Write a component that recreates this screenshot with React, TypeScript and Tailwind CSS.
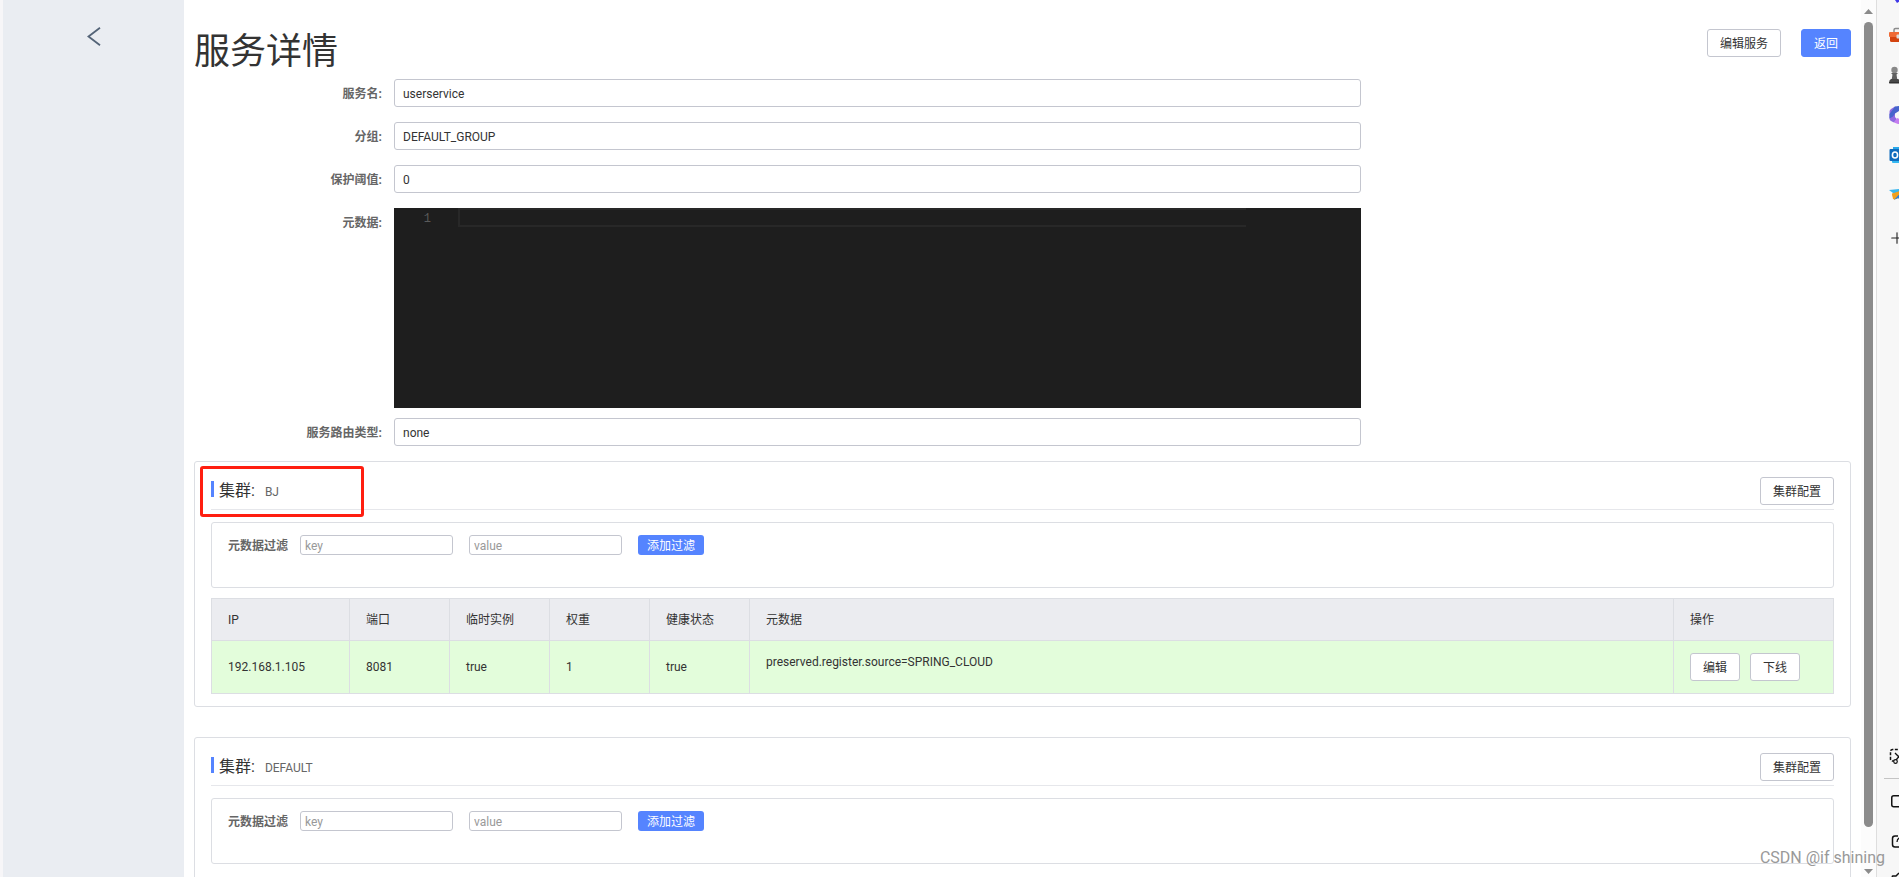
import { ReactNode } from "react"
import { Plus } from "lucide-react"

type Instance = {
  ip: string
  port: number
  ephemeral: boolean
  weight: number
  healthy: boolean
  metadata: string
}

type Cluster = {
  name: string
  marked?: boolean
  instances: Instance[]
}

const clusters: Cluster[] = [
  {
    name: "BJ",
    marked: true,
    instances: [
      {
        ip: "192.168.1.105",
        port: 8081,
        ephemeral: true,
        weight: 1,
        healthy: true,
        metadata: "preserved.register.source=SPRING_CLOUD",
      },
    ],
  },
  { name: "DEFAULT", instances: [] },
]

function Button({ children, primary }: { children: ReactNode; primary?: boolean }) {
  return (
    <button
      className={`h-7 shrink-0 rounded-[3px] border px-3 pt-0.5 text-xs whitespace-nowrap cursor-pointer ${
        primary ? "border-[#5584ff] bg-[#5584ff] text-white" : "border-[#c4c6cf] bg-white text-[#333]"
      }`}
    >
      {children}
    </button>
  )
}

function FormRow({ id, label, value }: { id: string; label: string; value: string }) {
  return (
    <div className="mb-[15px] flex">
      <label htmlFor={id} className="w-[200px] shrink-0 pr-3 text-right text-xs leading-[30px] font-bold text-[#666] h-7">
        {label}:
      </label>
      <input
        id={id}
        readOnly
        defaultValue={value}
        className="h-7 w-7/12 rounded-[3px] border border-[#c4c6cf] bg-white px-2 pt-0.5 text-xs text-[#333] outline-none"
      />
    </div>
  )
}

function MetadataEditor() {
  return (
    <div className="mb-2.5 flex">
      <label htmlFor="metadata" className="w-[200px] shrink-0 pr-3 text-right text-xs leading-[30px] font-bold text-[#666]">
        元数据:
      </label>
      <div className="flex h-[200px] w-7/12 bg-[#1e1e1e]">
        <span className="w-16 pr-[27px] text-right font-['Liberation_Mono',monospace] text-xs leading-[22px] text-[#5a5a5a]">
          1
        </span>
        <textarea
          id="metadata"
          readOnly
          className="mr-[115px] h-[19px] flex-1 resize-none border-2 border-r-0 border-[#282828] bg-transparent text-xs text-white outline-none"
        />
      </div>
    </div>
  )
}

function MetadataFilter({ name }: { name: string }) {
  const inputClass =
    "mr-4 h-5 w-[153px] rounded-[3px] border border-[#c4c6cf] px-1 pt-0.5 text-xs text-[#333] outline-none placeholder:text-[#999]"
  return (
    <div className="mt-3 flex items-center rounded-[3px] border border-[#dcdee3] px-4 pt-3 pb-8">
      <label htmlFor={`${name}-key`} className="mr-3 h-5 text-xs leading-[22px] font-bold text-[#666]">
        元数据过滤
      </label>
      <input id={`${name}-key`} placeholder="key" className={inputClass} />
      <input aria-label="value" placeholder="value" className={inputClass} />
      <button className="h-5 rounded-[3px] bg-[#5584ff] px-[9px] text-xs leading-[22px] text-white cursor-pointer">
        添加过滤
      </button>
    </div>
  )
}

function InstanceTable({ instances }: { instances: Instance[] }) {
  const th = "border border-[#dcdee3] px-4 text-left font-normal"
  const td = "border border-[#dcdee3] px-4"
  return (
    <table className="mt-2.5 w-full table-fixed border-collapse text-xs text-[#333]">
      <thead>
        <tr className="h-[42px] bg-[#ebecf0]">
          <th className={`${th} w-[138px]`}>IP</th>
          <th className={`${th} w-[100px]`}>端口</th>
          <th className={`${th} w-[100px]`}>临时实例</th>
          <th className={`${th} w-[100px]`}>权重</th>
          <th className={`${th} w-[100px]`}>健康状态</th>
          <th className={th}>元数据</th>
          <th className={`${th} w-[160px]`}>操作</th>
        </tr>
      </thead>
      <tbody>
        {instances.map((item) => (
          <tr key={item.ip} className="h-[53px] bg-[#e3fddb]">
            <td className={td}>{item.ip}</td>
            <td className={td}>{item.port}</td>
            <td className={td}>{String(item.ephemeral)}</td>
            <td className={td}>{item.weight}</td>
            <td className={td}>{String(item.healthy)}</td>
            <td className={`${td} pb-2.5`}>{item.metadata}</td>
            <td className={td}>
              <div className="flex gap-2.5">
                <Button>编辑</Button>
                <Button>下线</Button>
              </div>
            </td>
          </tr>
        ))}
      </tbody>
    </table>
  )
}

function ClusterCard({ cluster }: { cluster: Cluster }) {
  return (
    <section className="relative mb-[30px] min-h-[246px] rounded-[3px] border border-[#dcdee3] px-4 pt-[15px] pb-3">
      <div className="flex items-start justify-between border-b border-[#e6e7eb] pb-1">
        <h2 className="mt-1 flex items-start text-[#333]">
          <span className="mr-[5px] h-4 w-[3px] bg-[#5584ff]" />
          <span className="text-base leading-5">集群:</span>
          <span className="ml-2.5 text-xs leading-[22px] text-[#666]">{cluster.name}</span>
        </h2>
        <Button>集群配置</Button>
      </div>
      <MetadataFilter name={cluster.name} />
      {cluster.instances.length > 0 && <InstanceTable instances={cluster.instances} />}
      {cluster.marked && (
        <div className="pointer-events-none absolute top-1 left-[5px] h-[51px] w-[164px] rounded-[3px] border-3 border-[#ff1e10]" />
      )}
    </section>
  )
}

function Scrollbar() {
  return (
    <div className="flex w-[15px] shrink-0 flex-col items-center bg-[#fcfcfc] pt-[9px] pb-[3px]">
      <svg width="9" height="5" viewBox="0 0 9 5" className="shrink-0">
        <path d="M4.5 0 9 5H0z" fill="#8b8b8b" />
      </svg>
      <div className="mt-2 mb-[42px] w-[9px] flex-1 rounded-full bg-[#8b8b8b]" />
      <svg width="9" height="5" viewBox="0 0 9 5" className="shrink-0">
        <path d="M0 0h9L4.5 5z" fill="#8b8b8b" />
      </svg>
    </div>
  )
}

function BarIcon({ children, label }: { children: ReactNode; label: string }) {
  return (
    <button aria-label={label} className="flex h-10 w-8 shrink-0 items-center pl-3 cursor-pointer">
      <svg width="20" height="20" viewBox="0 0 20 20" fill="none" className="shrink-0">
        {children}
      </svg>
    </button>
  )
}

function BrowserBar() {
  return (
    <aside className="flex w-[23px] shrink-0 flex-col justify-between overflow-hidden border-l border-[#dedede] bg-[#f7f7f7]">
      <div className="-mt-[25px] flex flex-col">
        <BarIcon label="search">
          <circle cx="10" cy="9" r="7" fill="#3d4ef5" />
          <path d="M4 12l4 6 6-4z" fill="#4038e8" />
        </BarIcon>
        <BarIcon label="tools">
          <path d="M5 7V5Q5 3.500 6.500 3.500h7Q15 3.500 15 5V7" stroke="#8c8c8c" strokeWidth="1.500" />
          <rect x="0" y="7" width="20" height="5" rx="1" fill="#ef6a35" />
          <path d="M1 12h18v3.500q0 1.500-1.500 1.500h-15Q1 17 1 15.500z" fill="#d3430f" />
          <rect x="7.500" y="9.500" width="5" height="4" rx="1" fill="#ddd" />
        </BarIcon>
        <BarIcon label="games">
          <circle cx="5.500" cy="5" r="3.200" fill="#888" />
          <path d="M2 8h7l-1.500 1.500.8 5H2.700l.8-5z" fill="#606060" />
          <path d="M0 18q0-3 2-4h7q2 1 2 4z" fill="#484848" />
          <rect x="0" y="17" width="11" height="1.500" rx=".7" fill="#333" />
        </BarIcon>
        <BarIcon label="office">
          <path d="M6 1.500 2 4Q.5 5 .5 6.500v7q0 1.500 1.500 2.500l3 1.500 3-3-2-2.500V8l4-3z" fill="#8f6ae0" />
          <path d="M6 1.500 10 1l8 5-4 4-4-4-4 2.500-2 3-3.500 2V9z" fill="#4664cc" />
          <path d="M5 17.500 8 13l3 1 7-3v4l-6 4H9z" fill="#c57ef0" />
        </BarIcon>
        <BarIcon label="outlook">
          <rect x="4" y="2" width="14" height="6" fill="#28a8ea" />
          <rect x="4" y="8" width="14" height="10" fill="#1490df" />
          <rect x="3" y="15" width="16" height="3" rx="1" fill="#35b8f1" />
          <rect x="0.500" y="4" width="11" height="12" rx="1" fill="#0f6cbd" />
          <ellipse cx="6" cy="10" rx="2.600" ry="3" stroke="#fff" strokeWidth="1.600" />
        </BarIcon>
        <BarIcon label="drop">
          <path d="M0 5 20 3 14 10 4 8z" fill="#38b6ef" />
          <path d="M3 9 16 4 8 14H4z" fill="#f0a020" />
          <path d="M5 15 8 9l8-4-5 10-2-2z" fill="#2a7fe0" />
          <path d="M3 8.500 13 6 5 15z" fill="#f0a020" />
        </BarIcon>
        <button aria-label="add" className="mt-[3px] flex h-10 w-10 shrink-0 items-center pl-[11px] cursor-pointer">
          <Plus className="size-[18px] shrink-0 text-[#222]" strokeWidth={1.5} />
        </button>
      </div>
      <div className="-mb-6 flex flex-col">
        <BarIcon label="screenshot">
          <path d="M6 15H3.500Q1.500 15 1.500 13V5.500q0-2 2-2h12q2 0 2 2V13" stroke="#111" strokeWidth="1.500" strokeDasharray="3 1.500" />
          <path d="M6 7l8 8M12 8l-5 6" stroke="#111" strokeWidth="1.300" />
          <circle cx="6.500" cy="15.500" r="1.800" fill="#f7f7f7" stroke="#111" strokeWidth="1.200" />
        </BarIcon>
        <hr className="mt-0.5 mb-0.5 ml-[7px] w-6 border-[#c4c4c4]" />
        <BarIcon label="split">
          <rect x="2.750" y="4.750" width="15" height="11" rx="2" stroke="#111" strokeWidth="1.500" />
        </BarIcon>
        <BarIcon label="open">
          <path d="M9 5H6Q3.500 5 3.500 7.500v6Q3.500 16 6 16h7q2.500 0 2.500-2.500" stroke="#111" strokeWidth="1.500" />
          <path d="M8 11q0-4 5-5M11 4l3 2-2 3" stroke="#111" strokeWidth="1.300" />
        </BarIcon>
        <BarIcon label="settings">
          <path d="M10 2 7 5 3.500 5 2.500 9 5 11 2.500 14 5 17l4-1 2 3 4-3" stroke="#111" strokeWidth="1.500" strokeLinejoin="round" />
          <circle cx="10" cy="11" r="2.500" stroke="#111" strokeWidth="1.300" />
        </BarIcon>
      </div>
    </aside>
  )
}

export default function App() {
  return (
    <div className="relative flex h-screen overflow-hidden bg-white font-[Roboto,'Noto_Sans_CJK_SC',sans-serif]">
      <nav className="w-[184px] shrink-0 border-l-3 border-[#f7f6f8] bg-[#eaedf2] pt-[27px] pl-[84px]">
        <button aria-label="返回上一页" className="block cursor-pointer">
          <svg width="14" height="19" viewBox="0 0 14 19" fill="none" stroke="#546478" strokeWidth="1.8">
            <path d="M13 .8 1.500 9.500 13 18.200" />
          </svg>
        </button>
      </nav>

      <main className="min-w-0 flex-1 overflow-hidden px-2.5 pt-[29px]">
        <header className="flex h-[50px] items-start gap-5">
          <h1 className="flex-1 text-4xl leading-[46px] text-[#333]">服务详情</h1>
          <Button>编辑服务</Button>
          <Button primary>返回</Button>
        </header>

        <form>
          <FormRow id="name" label="服务名" value="userservice" />
          <FormRow id="group" label="分组" value="DEFAULT_GROUP" />
          <FormRow id="threshold" label="保护阈值" value="0" />
          <MetadataEditor />
          <FormRow id="selector" label="服务路由类型" value="none" />
        </form>

        {clusters.map((cluster) => (
          <ClusterCard key={cluster.name} cluster={cluster} />
        ))}
      </main>

      <Scrollbar />
      <BrowserBar />

      <span className="pointer-events-none absolute right-[14px] bottom-[7px] text-base text-[#999]">
        CSDN @if shining
      </span>
    </div>
  )
}
